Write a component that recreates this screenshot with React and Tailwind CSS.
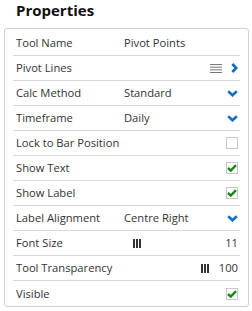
const rows = [
  { label: 'Tool Name', value: 'Pivot Points' },
  { label: 'Pivot Lines', kind: 'list' },
  { label: 'Calc Method', value: 'Standard', kind: 'select' },
  { label: 'Timeframe', value: 'Daily', kind: 'select' },
  { label: 'Lock to Bar Position', kind: 'check', checked: false },
  { label: 'Show Text', kind: 'check', checked: true },
  { label: 'Show Label', kind: 'check', checked: true },
  { label: 'Label Alignment', value: 'Centre Right', kind: 'select' },
  { label: 'Font Size', kind: 'slider', num: '11', handle: 'left' },
  { label: 'Tool Transparency', kind: 'slider', num: '100', handle: 'right' },
  { label: 'Visible', kind: 'check', checked: true },
];

function ChevronDown() {
  return (
    <svg width="11" height="7" viewBox="0 0 11 7" className="shrink-0">
      <path d="M1.2 1.2 L5.5 5.3 L9.8 1.2" fill="none" stroke="#136fc2" strokeWidth="2.6" />
    </svg>
  );
}

function ChevronRight() {
  return (
    <svg width="7" height="10" viewBox="0 0 7 10" className="shrink-0">
      <path d="M1.3 1 L5.2 5 L1.3 9" fill="none" stroke="#136fc2" strokeWidth="2.6" />
    </svg>
  );
}

function Lines() {
  return (
    <svg width="12" height="9" viewBox="0 0 12 9" className="shrink-0">
      {[0.5, 3.17, 5.83, 8.5].map((y) => (
        <line key={y} x1="0" x2="12" y1={y} y2={y} stroke="#777" strokeWidth="1" />
      ))}
    </svg>
  );
}

function Handle() {
  return (
    <svg width="8" height="9" viewBox="0 0 8 9" className="shrink-0">
      <rect x="0" y="0" width="2" height="9" fill="#333" />
      <rect x="3" y="0" width="2" height="9" fill="#333" />
      <rect x="6" y="0" width="2" height="9" fill="#333" />
    </svg>
  );
}

function Checkbox({ checked }) {
  return (
    <div className="w-[12px] h-[12px] border border-[#c8c8c8] bg-white flex items-center justify-center">
      {checked && (
        <svg width="10" height="8" viewBox="0 0 10 8">
          <path d="M1 4 L3.8 6.6 L9 1.2" fill="none" stroke="#17881a" strokeWidth="2.4" />
        </svg>
      )}
    </div>
  );
}

function Row({ row, last }) {
  return (
    <div
      className={`h-[25px] flex items-center pl-[3px] pr-[2px] ${last ? '' : 'border-b border-[#d8d8d8]'}`}
    >
      <div className="w-[108px] shrink-0 whitespace-nowrap">{row.label}</div>
      <div className="flex-1 flex items-center min-w-0">
        {row.value && <span className="whitespace-nowrap">{row.value}</span>}
        {row.kind === 'slider' && row.handle === 'left' && (
          <div className="ml-[9px]">
            <Handle />
          </div>
        )}
        <div className="flex-1" />
        {row.kind === 'select' && <ChevronDown />}
        {row.kind === 'list' && (
          <div className="flex items-center gap-[9px]">
            <Lines />
            <ChevronRight />
          </div>
        )}
        {row.kind === 'check' && <Checkbox checked={row.checked} />}
        {row.kind === 'slider' && (
          <div className="flex items-center gap-[10px]">
            {row.handle === 'right' && <Handle />}
            <span>{row.num}</span>
          </div>
        )}
      </div>
    </div>
  );
}

export default function App() {
  return (
    <div className="w-[252px] h-[311px] bg-white font-['Open_Sans',sans-serif] text-[#333] overflow-hidden">
      <h1 className="pl-[16px] text-[15px] leading-[20px] font-bold text-[#111]">Properties</h1>
      <div className="ml-[4px] mt-[8px] w-[245px] border border-[#cfcfcf] rounded-[3px] px-2 pt-[2px] text-[11.2px] leading-[16px]">
        {rows.map((row, i) => (
          <Row key={row.label} row={row} last={i === rows.length - 1} />
        ))}
      </div>
    </div>
  );
}
